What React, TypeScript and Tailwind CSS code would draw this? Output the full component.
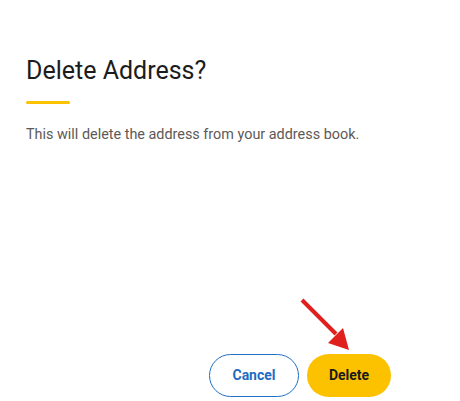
import React from "react";

export default function App() {
  return (
    <div
      className="relative h-[401px] w-[460px] overflow-hidden bg-white flex flex-col"
      style={{ fontFamily: "Roboto, 'Liberation Sans', sans-serif" }}
    >
      {/* Header */}
      <div className="pl-[26px] pt-[53px]">
        <h2 className="text-[25px] leading-[36px] font-normal text-[#1c1c1c]">Delete Address?</h2>
        <div className="mt-[12px] h-[3px] w-[44px] rounded-full bg-[#fcc200]" />
        <p className="mt-[20px] text-[14.4px] leading-[21px] text-[#5e5955]">
          This will delete the address from your address book.
        </p>
      </div>

      {/* Actions */}
      <div className="mt-auto mb-[4px] mr-[69px] flex justify-end gap-[8px]">
        <button className="h-[43px] w-[90px] rounded-full border border-[#1f6fc5] bg-white text-[14px] font-bold text-[#1f6bc0]">
          Cancel
        </button>
        <button className="h-[43px] w-[84px] rounded-full bg-[#fcc200] text-[14px] font-bold text-[#1a1a1a]">
          Delete
        </button>
      </div>

      {/* Red pointer arrow */}
      <svg className="pointer-events-none absolute left-0 top-0" width="460" height="401" viewBox="0 0 460 401">
        <line x1="302" y1="300" x2="336" y2="334" stroke="#e0201f" strokeWidth="4" strokeLinecap="butt" />
        <polygon points="349,350 328,343 343,328" fill="#e0201f" />
      </svg>
    </div>
  );
}
